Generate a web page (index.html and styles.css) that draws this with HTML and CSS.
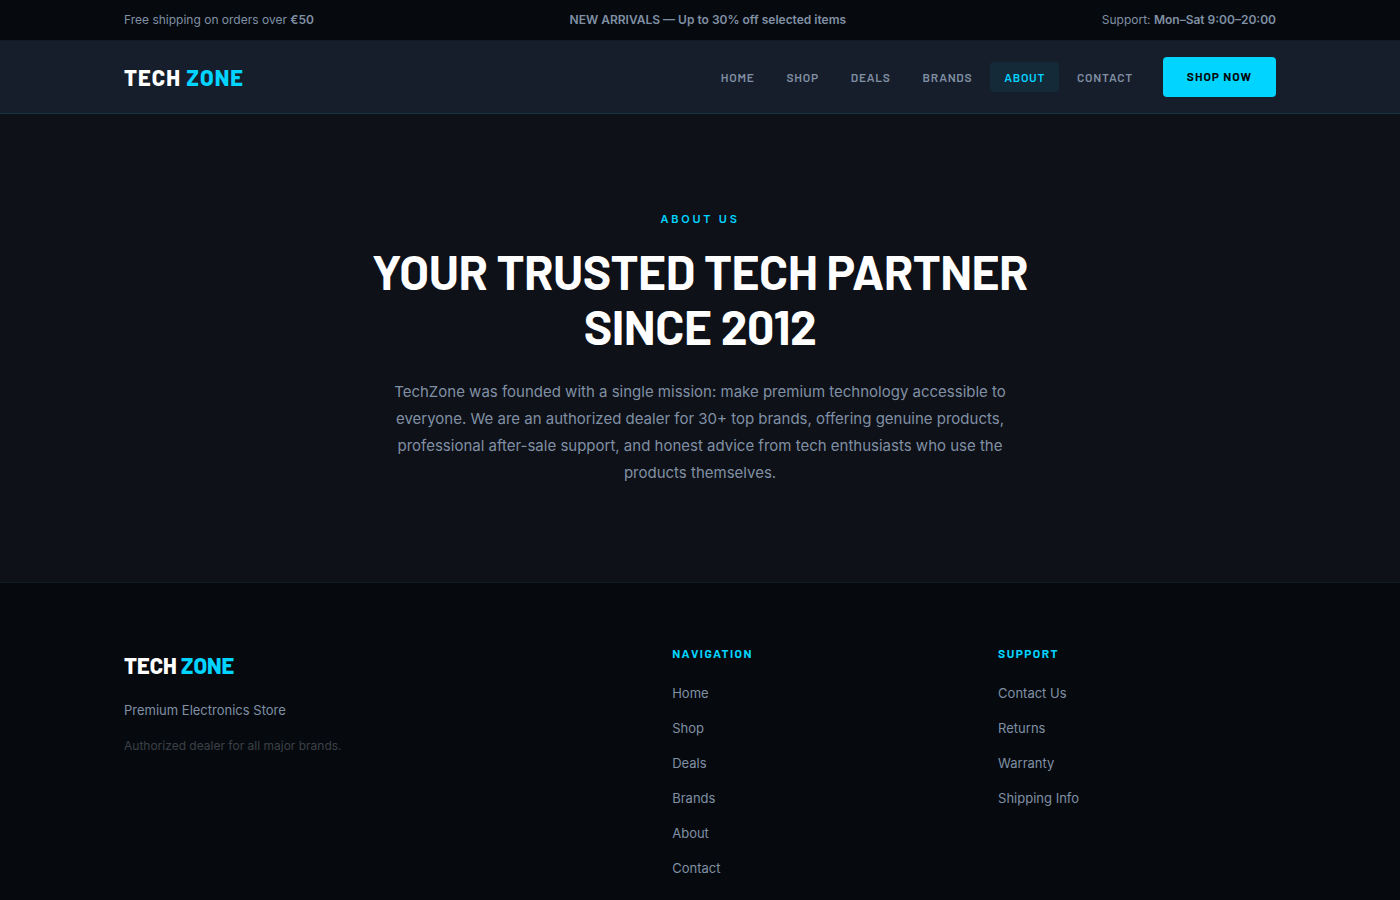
FILE: index.html
```html
<!DOCTYPE html>
<html lang="en">
<head>
  <meta charset="UTF-8">
  <meta name="viewport" content="width=device-width, initial-scale=1.0">
  <title>About Us | Tech Zone</title>
  <link rel="stylesheet" href="styles.css">
</head>
<body>

  <div class="topbar">
    <div class="container topbar-inner">
      <span>Free shipping on orders over <strong>€50</strong></span>
      <span><strong>NEW ARRIVALS — Up to 30% off selected items</strong></span>
      <span>Support: <strong>Mon–Sat 9:00–20:00</strong></span>
    </div>
  </div>

  <header class="header">
    <div class="container header-inner">
      <a href="#" class="logo">TECH <span>ZONE</span></a>
      <nav class="nav">
        <ul>
          <li><a href="#">Home</a></li>
          <li><a href="#">Shop</a></li>
          <li><a href="#">Deals</a></li>
          <li><a href="#">Brands</a></li>
          <li><a href="#" class="active">About</a></li>
          <li><a href="#">Contact</a></li>
        </ul>
        <button type="button" class="btn">Shop Now</button>
      </nav>
    </div>
  </header>

  <main class="hero">
    <div class="hero-inner">
      <div class="eyebrow">About Us</div>
      <h1>Your Trusted Tech Partner<br>Since 2012</h1>
      <p>TechZone was founded with a single mission: make premium technology accessible to everyone. We are an authorized dealer for 30+ top brands, offering genuine products, professional after-sale support, and honest advice from tech enthusiasts who use the products themselves.</p>
    </div>
  </main>

  <footer class="footer">
    <div class="container footer-grid">
      <div>
        <div class="footer-logo">TECH <span>ZONE</span></div>
        <p class="tagline">Premium Electronics Store</p>
        <p class="note">Authorized dealer for all major brands.</p>
      </div>
      <div>
        <h4>Navigation</h4>
        <ul>
          <li><a href="#">Home</a></li>
          <li><a href="#">Shop</a></li>
          <li><a href="#">Deals</a></li>
          <li><a href="#">Brands</a></li>
          <li><a href="#">About</a></li>
          <li><a href="#">Contact</a></li>
        </ul>
      </div>
      <div>
        <h4>Support</h4>
        <ul>
          <li><a href="#">Contact Us</a></li>
          <li><a href="#">Returns</a></li>
          <li><a href="#">Warranty</a></li>
          <li><a href="#">Shipping Info</a></li>
        </ul>
      </div>
    </div>
  </footer>

</body>
</html>
```
FILE: styles.css
```css
:root {
  --cyan: #00d4ff;
  --muted: #8090a4;
  --black: #060a0f;
  --dark: #0e1118;
  --display: "Barlow", Roboto, sans-serif;
}

* {
  margin: 0;
  padding: 0;
  box-sizing: border-box;
}

body {
  background: var(--dark);
  color: var(--muted);
  font-family: Inter, sans-serif;
  font-size: 13px;
  line-height: 21px;
}

a {
  color: inherit;
  text-decoration: none;
}

ul {
  list-style: none;
}

.container {
  max-width: 1200px;
  margin: 0 auto;
  padding: 0 24px;
}

/* Top bar */
.topbar {
  background: var(--black);
  border-bottom: 1px solid #101a24;
  font-size: 12px;
  line-height: 20px;
}

.topbar-inner {
  display: flex;
  justify-content: space-between;
  padding-top: 10px;
  padding-bottom: 10px;
}

.topbar strong {
  font-weight: 600;
}

/* Header */
.header {
  background: #171e2b;
  border-bottom: 1px solid #143444;
}

.header-inner {
  display: flex;
  align-items: center;
  justify-content: space-between;
  padding-top: 16px;
  padding-bottom: 16px;
}

.logo,
.footer-logo {
  color: #fff;
  font-family: var(--display);
  font-size: 22px;
  font-weight: 800;
  line-height: 36px;
}

.logo {
  letter-spacing: 0.05em;
}

.logo span,
.footer-logo span {
  color: var(--cyan);
}

.nav {
  display: flex;
  align-items: center;
  gap: 16px;
  font-family: var(--display);
  font-size: 12px;
  font-weight: 600;
  line-height: 19px;
  text-transform: uppercase;
}

.nav ul {
  display: flex;
  gap: 4px;
}

.nav a {
  padding: 8px 14px;
  border-radius: 4px;
  letter-spacing: 0.06em;
}

.nav a.active {
  background: #142a39;
  color: var(--cyan);
}

.btn {
  padding: 10px 24px 11px;
  border: 0;
  border-radius: 4px;
  background: var(--cyan);
  color: var(--black);
  cursor: pointer;
  font: inherit;
  font-weight: 700;
  letter-spacing: 0.08em;
  text-transform: uppercase;
}

/* Hero */
.hero {
  padding: 96px 24px;
  text-align: center;
}

.hero-inner {
  max-width: 720px;
  margin: 0 auto;
}

.eyebrow {
  margin-bottom: 16px;
  color: var(--cyan);
  font-size: 11px;
  font-weight: 600;
  letter-spacing: 0.25em;
  line-height: 18px;
  text-transform: uppercase;
}

.hero h1 {
  margin-bottom: 24px;
  color: #fff;
  font-family: var(--display);
  font-size: 48px;
  font-weight: 700;
  letter-spacing: -0.01em;
  line-height: 55px;
  text-transform: uppercase;
}

.hero p {
  max-width: 620px;
  margin: 0 auto;
  font-size: 15px;
  line-height: 27px;
}

/* Footer */
.footer {
  padding: 64px 0 28px;
  background: var(--black);
  border-top: 1px solid #0e1c25;
}

.footer-grid {
  display: grid;
  grid-template-columns: 1.8fr 1fr 1fr;
  gap: 48px;
}

.footer-logo {
  margin-bottom: 17px;
}

.tagline {
  margin-bottom: 14px;
}

.note {
  color: #3c4046;
  font-size: 12px;
}

.footer h4 {
  margin-bottom: 24px;
  color: var(--cyan);
  font-family: var(--display);
  font-size: 12px;
  font-weight: 700;
  letter-spacing: 0.12em;
  line-height: 12px;
  text-transform: uppercase;
}

.footer li {
  margin-bottom: 14px;
}
```
